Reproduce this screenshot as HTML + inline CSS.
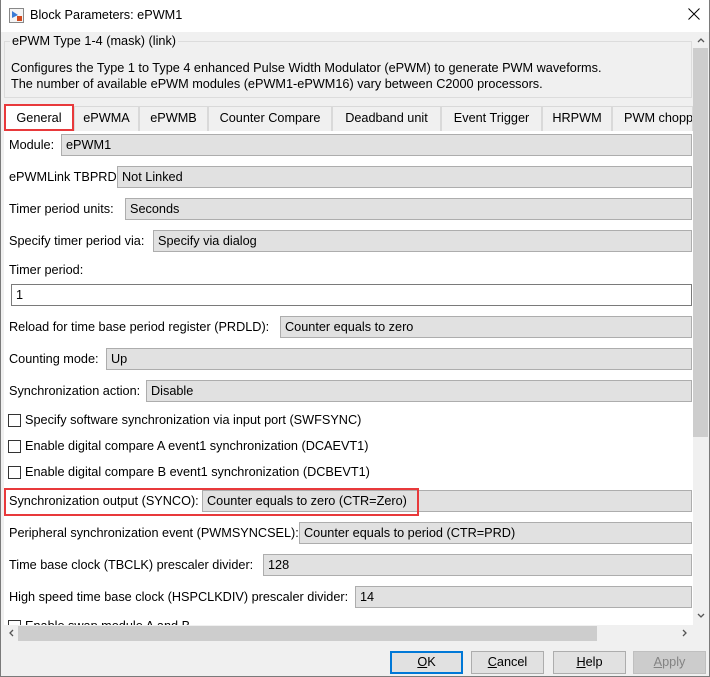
<!DOCTYPE html>
<html><head><meta charset="utf-8"><style>
*{margin:0;padding:0;box-sizing:border-box}
body{width:710px;height:677px;overflow:hidden;background:#f0f0f0;font-family:"Liberation Sans",sans-serif;font-size:12.7px;color:#000;position:relative}
.a{position:absolute;white-space:nowrap}
.win{position:absolute;left:0;top:0;width:710px;height:677px;border:1px solid #7a7a7a;border-top:none}
.fld{position:absolute;height:22px;background:#e1e1e1;border:1px solid #adadad;right:18px;padding-left:4px;line-height:21px;white-space:nowrap}
.lbl{position:absolute;left:9px;line-height:16px;white-space:nowrap}
.cb{position:absolute;left:8px;width:13px;height:13px;border:1px solid #333;background:#fff}
.tab{position:absolute;top:106px;height:25px;border:1px solid #d9d9d9;border-bottom:none;background:#f0f0f0;text-align:center;line-height:23px;white-space:nowrap}
.btn{position:absolute;top:651px;height:23px;width:73px;border:1px solid #adadad;background:#e1e1e1;text-align:center;line-height:21px}
</style></head><body>
<div class="a" style="left:0;top:0;width:710px;height:32px;background:#fff"></div>
<svg class="a" style="left:9px;top:8px" width="15" height="15"><rect x="0.5" y="0.5" width="14" height="14" fill="#f4f4f4" stroke="#888"/><path d="M3 3 L9 7 L3 10Z" fill="#3a7bd5"/><rect x="8" y="8" width="5" height="5" fill="#d24a1f"/></svg>
<div class="a" style="left:30px;top:8px;font-size:12.7px">Block Parameters: ePWM1</div>
<svg class="a" style="left:688px;top:8px" width="12" height="12"><path d="M0.5 0.5L11.5 11.5M11.5 0.5L0.5 11.5" stroke="#000" stroke-width="1"/></svg>
<div class="a" style="left:4px;top:41px;width:688px;height:57px;border:1px solid #dcdcdc"></div>
<div class="a" style="left:10px;top:34px;background:#f0f0f0;padding:0 2px">ePWM Type 1-4 (mask) (link)</div>
<div class="a" style="left:11px;top:60px;line-height:16px">Configures the Type 1 to Type 4 enhanced Pulse Width Modulator (ePWM) to generate PWM waveforms.<br>The number of available ePWM modules (ePWM1-ePWM16) vary between C2000 processors.</div>
<!-- vertical scrollbar -->
<div class="a" style="left:693px;top:33px;width:16px;height:592px;background:#f0f0f0"></div>
<div class="a" style="left:693px;top:48px;width:15px;height:389px;background:#cdcdcd"></div>
<svg class="a" style="left:697px;top:37px" width="8" height="6"><path d="M1 5L4 2L7 5" stroke="#555" stroke-width="1.3" fill="none"/></svg>
<svg class="a" style="left:697px;top:613px" width="8" height="6"><path d="M1 1L4 4L7 1" stroke="#555" stroke-width="1.3" fill="none"/></svg>
<!-- content -->
<div class="a" style="left:4px;top:131px;width:689px;height:494px;background:#fff;overflow:hidden"></div>
<div class="tab" style="left:74px;width:65px">ePWMA</div>
<div class="tab" style="left:139px;width:69px">ePWMB</div>
<div class="tab" style="left:208px;width:124px">Counter Compare</div>
<div class="tab" style="left:332px;width:109px">Deadband unit</div>
<div class="tab" style="left:441px;width:101px">Event Trigger</div>
<div class="tab" style="left:542px;width:70px">HRPWM</div>
<div class="tab" style="left:612px;width:81px;text-align:left;padding-left:11px;overflow:hidden">PWM chopper</div>
<div class="tab" style="left:4px;top:104px;height:27px;width:70px;background:#fff;border:2px solid #e8393b;line-height:25px">General</div>
<div class="lbl" style="top:137px">Module:</div><div class="fld" style="left:61px;top:134px">ePWM1</div>
<div class="lbl" style="top:169px">ePWMLink TBPRD</div><div class="fld" style="left:117px;top:166px">Not Linked</div>
<div class="lbl" style="top:201px">Timer period units:</div><div class="fld" style="left:125px;top:198px">Seconds</div>
<div class="lbl" style="top:233px">Specify timer period via:</div><div class="fld" style="left:153px;top:230px">Specify via dialog</div>
<div class="lbl" style="top:262px">Timer period:</div>
<div class="fld" style="left:11px;top:284px;background:#fff;border-color:#7a7a7a">1</div>
<div class="lbl" style="top:319px">Reload for time base period register (PRDLD):</div><div class="fld" style="left:280px;top:316px">Counter equals to zero</div>
<div class="lbl" style="top:351px">Counting mode:</div><div class="fld" style="left:106px;top:348px">Up</div>
<div class="lbl" style="top:383px">Synchronization action:</div><div class="fld" style="left:146px;top:380px">Disable</div>
<div class="cb" style="top:414px"></div><div class="lbl" style="left:25px;top:412px">Specify software synchronization via input port (SWFSYNC)</div>
<div class="cb" style="top:440px"></div><div class="lbl" style="left:25px;top:438px">Enable digital compare A event1 synchronization (DCAEVT1)</div>
<div class="cb" style="top:466px"></div><div class="lbl" style="left:25px;top:464px">Enable digital compare B event1 synchronization (DCBEVT1)</div>
<div class="lbl" style="top:493px">Synchronization output (SYNCO):</div><div class="fld" style="left:202px;top:490px">Counter equals to zero (CTR=Zero)</div>
<div class="a" style="left:4px;top:488px;width:415px;height:28px;border:2px solid #e8393b"></div>
<div class="lbl" style="top:525px">Peripheral synchronization event (PWMSYNCSEL):</div><div class="fld" style="left:299px;top:522px">Counter equals to period (CTR=PRD)</div>
<div class="lbl" style="top:557px">Time base clock (TBCLK) prescaler divider:</div><div class="fld" style="left:263px;top:554px">128</div>
<div class="lbl" style="top:589px">High speed time base clock (HSPCLKDIV) prescaler divider:</div><div class="fld" style="left:355px;top:586px">14</div>
<div class="a" style="left:4px;top:614px;width:689px;height:11px;overflow:hidden;background:#fff"><div class="cb" style="left:4px;top:6px"></div><div class="a" style="left:21px;top:5px">Enable swap module A and B</div></div>
<!-- h scrollbar -->
<div class="a" style="left:4px;top:625px;width:705px;height:16px;background:#f0f0f0"></div>
<div class="a" style="left:18px;top:626px;width:579px;height:15px;background:#cdcdcd"></div>
<svg class="a" style="left:8px;top:629px" width="6" height="8"><path d="M5 1L2 4L5 7" stroke="#555" stroke-width="1.3" fill="none"/></svg>
<svg class="a" style="left:682px;top:629px" width="6" height="8"><path d="M1 1L4 4L1 7" stroke="#555" stroke-width="1.3" fill="none"/></svg>
<div class="btn" style="left:390px;border:2px solid #0078d7;line-height:19px"><u>O</u>K</div>
<div class="btn" style="left:471px"><u>C</u>ancel</div>
<div class="btn" style="left:553px"><u>H</u>elp</div>
<div class="btn" style="left:633px;background:#cccccc;border-color:#bfbfbf;color:#838383"><u>A</u>pply</div>
<div class="win"></div>
</body></html>
